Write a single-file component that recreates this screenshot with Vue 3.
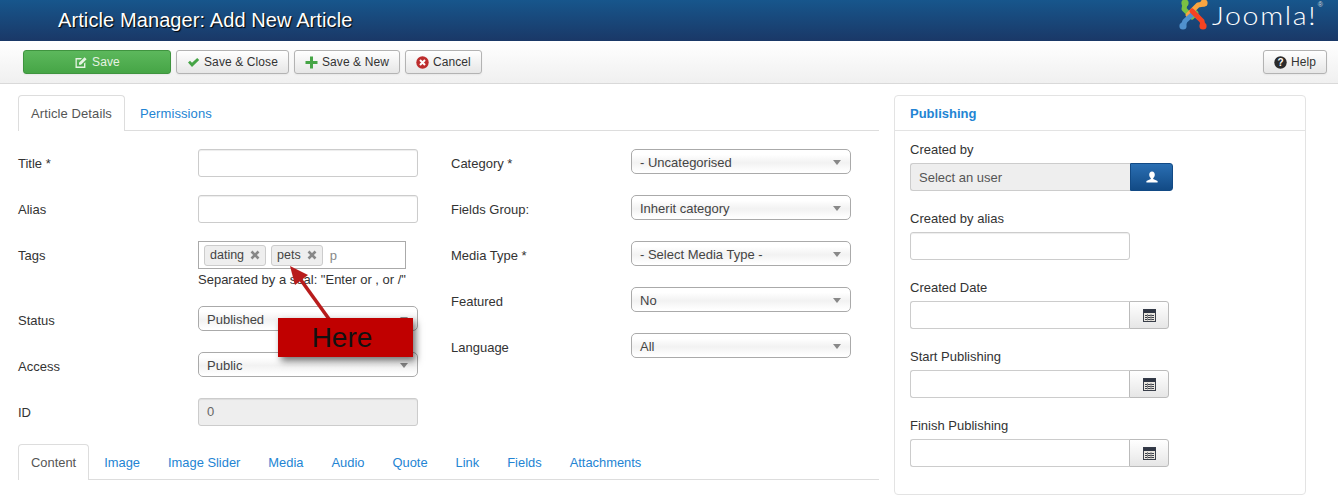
<template>
  <div class="page">
    <header class="topbar">
      <h1 class="title">Article Manager: Add New Article</h1>
      <div class="logo">
        <svg class="logo-mark" width="30" height="31" viewBox="0 0 30 31" fill="none" stroke-linecap="round" stroke-linejoin="round" stroke-width="5">
          <path d="M7 4 L6 9 L14 17 L18 13" stroke="#7ac143" />
          <circle cx="7" cy="3" r="3.6" fill="#7ac143" />
          <path d="M26 4 L20 5 L10 15" stroke="#f9a541" />
          <circle cx="26" cy="3" r="3.6" fill="#f9a541" />
          <path d="M5 26 L7 21 L16 13 L20 17" stroke="#5091cd" />
          <circle cx="5" cy="26" r="3.6" fill="#5091cd" />
          <path d="M25 26 L24 21 L14 11" stroke="#f44321" />
          <circle cx="25" cy="26" r="3.6" fill="#f44321" />
        </svg>
        <span class="logo-text">Joomla!</span>
        <sup class="logo-reg">®</sup>
      </div>
    </header>

    <nav class="toolbar">
      <button class="btn btn-save">
        <svg width="14" height="13" viewBox="0 0 14 13"><path d="M1.5 2H8L6.6 3.4H2.8V10.6H10V7.6L11.4 6.2V12H1.5Z M5 6.8 10.6 1.2 12.6 3.2 7 8.8H5Z" fill="#e6f3e3" /></svg>
        Save
      </button>
      <button class="btn">
        <svg width="13" height="11" viewBox="0 0 13 11"><path d="M1 5.6 3 3.8 5 5.8 10.2 1 12.2 3 5 10Z" fill="#46a546" /></svg>
        Save &amp; Close
      </button>
      <button class="btn">
        <svg width="13" height="13" viewBox="0 0 13 13"><path d="M5 0.5H8V5H12.5V8H8V12.5H5V8H0.5V5H5Z" fill="#46a546" /></svg>
        Save &amp; New
      </button>
      <button class="btn">
        <svg width="13" height="13" viewBox="0 0 13 13"><circle cx="6.5" cy="6.5" r="6.2" fill="#bd2d2d" /><path d="M4 4 9 9M9 4 4 9" stroke="#fff" stroke-width="2" /></svg>
        Cancel
      </button>
      <button class="btn btn-help">
        <svg width="13" height="13" viewBox="0 0 13 13"><circle cx="6.5" cy="6.5" r="6.2" fill="#2b2b2b" /><text x="6.5" y="10" text-anchor="middle" font-size="10" font-weight="700" fill="#fff" font-family="Liberation Sans, sans-serif">?</text></svg>
        Help
      </button>
    </nav>

    <main class="content">
      <section class="left">
        <ul class="tabs tabs-top">
          <li class="tab active">Article Details</li>
          <li class="tab">Permissions</li>
        </ul>

        <div class="form">
          <div class="col">
            <div class="row">
              <label>Title *</label>
              <div class="input"></div>
            </div>
            <div class="row">
              <label>Alias</label>
              <div class="input"></div>
            </div>
            <div class="row row-tags">
              <label>Tags</label>
              <div>
                <div class="tagbox">
                  <span v-for="t in tags" :key="t" class="tag">
                    {{ t }}
                    <svg class="tag-x" width="10" height="10" viewBox="0 0 10 10"><path d="M1.5 1.5 8.5 8.5M8.5 1.5 1.5 8.5" stroke="#888" stroke-width="2.6" /></svg>
                  </span>
                  <span class="tag-typed">p</span>
                </div>
                <p class="hint">Separated by a seal: "Enter or , or /"</p>
              </div>
            </div>
            <div class="row">
              <label>Status</label>
              <div class="select">Published</div>
            </div>
            <div class="row">
              <label>Access</label>
              <div class="select">Public</div>
            </div>
            <div class="row">
              <label>ID</label>
              <div class="input input-off">0</div>
            </div>
          </div>

          <div class="col">
            <div v-for="s in selects" :key="s.label" class="row">
              <label>{{ s.label }}</label>
              <div class="select">{{ s.value }}</div>
            </div>
          </div>
        </div>

        <ul class="tabs tabs-bottom">
          <li v-for="(t, i) in bottomTabs" :key="t" class="tab" :class="{ active: i === 0 }">{{ t }}</li>
        </ul>
      </section>

      <aside class="panel">
        <div class="panel-head">Publishing</div>
        <div class="panel-body">
          <div class="field">
            <label>Created by</label>
            <div class="group">
              <div class="user-input">Select an user</div>
              <button class="user-btn">
                <svg width="12" height="12" viewBox="0 0 12 12"><path d="M6 0.5C7.8 0.5 8.8 2 8.8 3.8 8.8 5.3 8 6.6 7.2 7.2V8L11.6 10V11.5H0.4V10L4.8 8V7.2C4 6.6 3.2 5.3 3.2 3.8 3.2 2 4.2 0.5 6 0.5Z" fill="#fff" /></svg>
              </button>
            </div>
          </div>
          <div class="field">
            <label>Created by alias</label>
            <div class="input"></div>
          </div>
          <div v-for="d in dates" :key="d" class="field">
            <label>{{ d }}</label>
            <div class="group">
              <div class="date-input"></div>
              <button class="cal-btn">
                <svg width="13" height="13" viewBox="0 0 13 13">
                  <rect x="0.5" y="0.5" width="12" height="12" fill="#e9e6df" stroke="#3a3f4a" />
                  <rect x="0.5" y="0.5" width="12" height="3.5" fill="#2f3644" />
                  <path d="M2 6.5H11M2 8.5H11M2 10.5H11" stroke="#3a3f4a" />
                  <path d="M4.5 5V11.5M8 5V11.5" stroke="#8a8a8a" />
                </svg>
              </button>
            </div>
          </div>
        </div>
      </aside>
    </main>

    <svg class="arrow" width="60" height="70" viewBox="0 0 60 70">
      <path d="M45 57 14 14" stroke="#b81c1c" stroke-width="3.5" />
      <path d="M6 4 24 13 11 23Z" fill="#b81c1c" />
    </svg>
    <div class="callout">Here</div>
  </div>
</template>

<script setup>
const tags = ["dating", "pets"];
const selects = [
  { label: "Category *", value: "- Uncategorised" },
  { label: "Fields Group:", value: "Inherit category" },
  { label: "Media Type *", value: "- Select Media Type -" },
  { label: "Featured", value: "No" },
  { label: "Language", value: "All" },
];
const bottomTabs = ["Content", "Image", "Image Slider", "Media", "Audio", "Quote", "Link", "Fields", "Attachments"];
const dates = ["Created Date", "Start Publishing", "Finish Publishing"];
</script>

<style>
body {
  background: #fff;
}
</style>

<style scoped>
.page {
  position: relative;
  width: 1338px;
  height: 497px;
  overflow: hidden;
  font-family: "Liberation Sans", Arial, sans-serif;
  font-size: 13px;
  color: #333;
  background: #fff;
}
.topbar {
  height: 41px;
  display: flex;
  align-items: center;
  justify-content: space-between;
  padding: 0 15px 0 58px;
  background: linear-gradient(#17568c, #1a3867);
}
.title {
  margin: 0;
  font-size: 20px;
  font-weight: 400;
  letter-spacing: 0.1px;
  color: #fff;
  text-shadow: 1px 1px 1px #000;
}
.logo {
  display: flex;
  align-items: flex-start;
  height: 41px;
}
.logo-mark {
  margin-right: 4px;
}
.logo-text {
  margin-right: 10px;
  font-family: Lato, "Open Sans", sans-serif;
  font-weight: 300;
  font-size: 26px;
  line-height: 31px;
  letter-spacing: 1.5px;
  color: #fff;
  transform: scaleX(1.1);
  transform-origin: left center;
}
.logo-reg {
  font-size: 7px;
  line-height: 10px;
  color: #ddd;
}
.toolbar {
  height: 43px;
  box-sizing: border-box;
  display: flex;
  align-items: flex-start;
  gap: 5px;
  padding: 9px 11px 0 23px;
  background: linear-gradient(#fff, #f0f0f0);
  border-bottom: 1px solid #d9d9d9;
}
.btn {
  height: 24px;
  box-sizing: border-box;
  display: flex;
  align-items: center;
  justify-content: center;
  gap: 4px;
  padding: 0 10px;
  font: inherit;
  font-size: 12px;
  letter-spacing: 0.1px;
  color: #333;
  background: linear-gradient(#fff, #e6e6e6);
  border: 1px solid #b3b3b3;
  border-radius: 3px;
  box-shadow: 0 1px 2px rgba(0, 0, 0, 0.05);
}
.btn-save {
  width: 148px;
  color: #e6f3e3;
  background: linear-gradient(#5cb85c, #46a546);
  border-color: #3f943f;
}
.btn-help {
  margin-left: auto;
}
.content {
  display: flex;
  gap: 15px;
  padding: 11px 0 0 18px;
}
.left {
  width: 861px;
}
.tabs {
  display: flex;
  height: 36px;
  box-sizing: border-box;
  margin: 0;
  padding: 0;
  list-style: none;
  border-bottom: 1px solid #ddd;
}
.tabs-top {
  letter-spacing: 0.1px;
}
.tabs-bottom {
  font-size: 12.9px;
}
.tab {
  height: 36px;
  box-sizing: border-box;
  padding: 0 12px;
  margin-right: 2px;
  line-height: 36px;
  color: #2384d3;
  border: 1px solid transparent;
  border-bottom: 0;
}
.tab.active {
  color: #555;
  background: #fff;
  border-color: #ddd;
  border-radius: 4px 4px 0 0;
}
.form {
  display: grid;
  grid-template-columns: 433px 1fr;
  padding-top: 18px;
  height: 313px;
  box-sizing: border-box;
}
.row {
  display: grid;
  grid-template-columns: 180px 220px;
  align-items: start;
  margin-bottom: 18px;
  min-height: 28px;
}
.row label {
  height: 28px;
  line-height: 30px;
}
.row-tags {
  margin-bottom: 17px;
}
.input {
  width: 220px;
  height: 28px;
  box-sizing: border-box;
  padding: 0 8px;
  line-height: 26px;
  background: #fff;
  border: 1px solid #ccc;
  border-radius: 3px;
  box-shadow: inset 0 1px 1px rgba(0, 0, 0, 0.075);
}
.input-off {
  background: #eee;
  color: #666;
}
.select {
  position: relative;
  width: 220px;
  height: 25px;
  box-sizing: border-box;
  padding: 0 8px;
  line-height: 25px;
  color: #444;
  background: linear-gradient(#fff 20%, #f2f2f2 55%, #fff 95%);
  border: 1px solid #aaa;
  border-radius: 5px;
}
.select::after {
  content: "";
  position: absolute;
  right: 9px;
  top: 10px;
  border: 4px solid transparent;
  border-top: 5px solid #888;
  border-bottom: 0;
}
.tagbox {
  width: 208px;
  height: 28px;
  box-sizing: border-box;
  display: flex;
  align-items: center;
  gap: 5px;
  padding: 0 5px;
  border: 1px solid #aaa;
}
.tag {
  display: flex;
  align-items: center;
  height: 21px;
  box-sizing: border-box;
  padding: 0 5px 0 5px;
  font-size: 12.5px;
  color: #444;
  background: #eee;
  border: 1px solid #ccc;
  border-radius: 3px;
}
.tag-x {
  margin-left: 6px;
}
.tag-typed {
  margin-left: 2px;
  color: #888;
}
.hint {
  margin: 2px 0 0;
  line-height: 18px;
  white-space: nowrap;
}
.panel {
  width: 412px;
  height: 400px;
  box-sizing: border-box;
  border: 1px solid #e3e3e3;
  border-radius: 4px;
}
.panel-head {
  height: 35px;
  box-sizing: border-box;
  padding-left: 15px;
  line-height: 35px;
  font-weight: 700;
  color: #2384d3;
  border-bottom: 1px solid #e3e3e3;
}
.panel-body {
  padding: 5px 15px 0;
}
.field {
  height: 69px;
}
.field label {
  display: block;
  line-height: 27px;
}
.group {
  display: flex;
}
.user-input {
  width: 220px;
  height: 28px;
  box-sizing: border-box;
  padding: 0 8px;
  line-height: 28px;
  color: #555;
  background: #eee;
  border: 1px solid #ccc;
  border-right: 0;
  border-radius: 3px 0 0 3px;
}
.user-btn {
  width: 43px;
  height: 28px;
  display: flex;
  align-items: center;
  justify-content: center;
  padding: 0;
  background: linear-gradient(#2a6fb3, #124a85);
  border: 1px solid #124a85;
  border-radius: 0 3px 3px 0;
}
.date-input {
  width: 219px;
  height: 28px;
  box-sizing: border-box;
  background: #fff;
  border: 1px solid #ccc;
  border-right: 0;
  border-radius: 3px 0 0 3px;
}
.cal-btn {
  width: 40px;
  height: 28px;
  display: flex;
  align-items: center;
  justify-content: center;
  padding: 0;
  background: linear-gradient(#fff, #e6e6e6);
  border: 1px solid #bbb;
  border-radius: 0 3px 3px 0;
}
.arrow {
  position: absolute;
  left: 284px;
  top: 262px;
}
.callout {
  position: absolute;
  left: 278px;
  top: 318px;
  width: 135px;
  height: 39px;
  box-sizing: border-box;
  padding-right: 7px;
  text-align: center;
  font-size: 28px;
  line-height: 39px;
  color: #111;
  background: #c00000;
  box-shadow: 3px 4px 7px rgba(0, 0, 0, 0.55);
}
</style>
